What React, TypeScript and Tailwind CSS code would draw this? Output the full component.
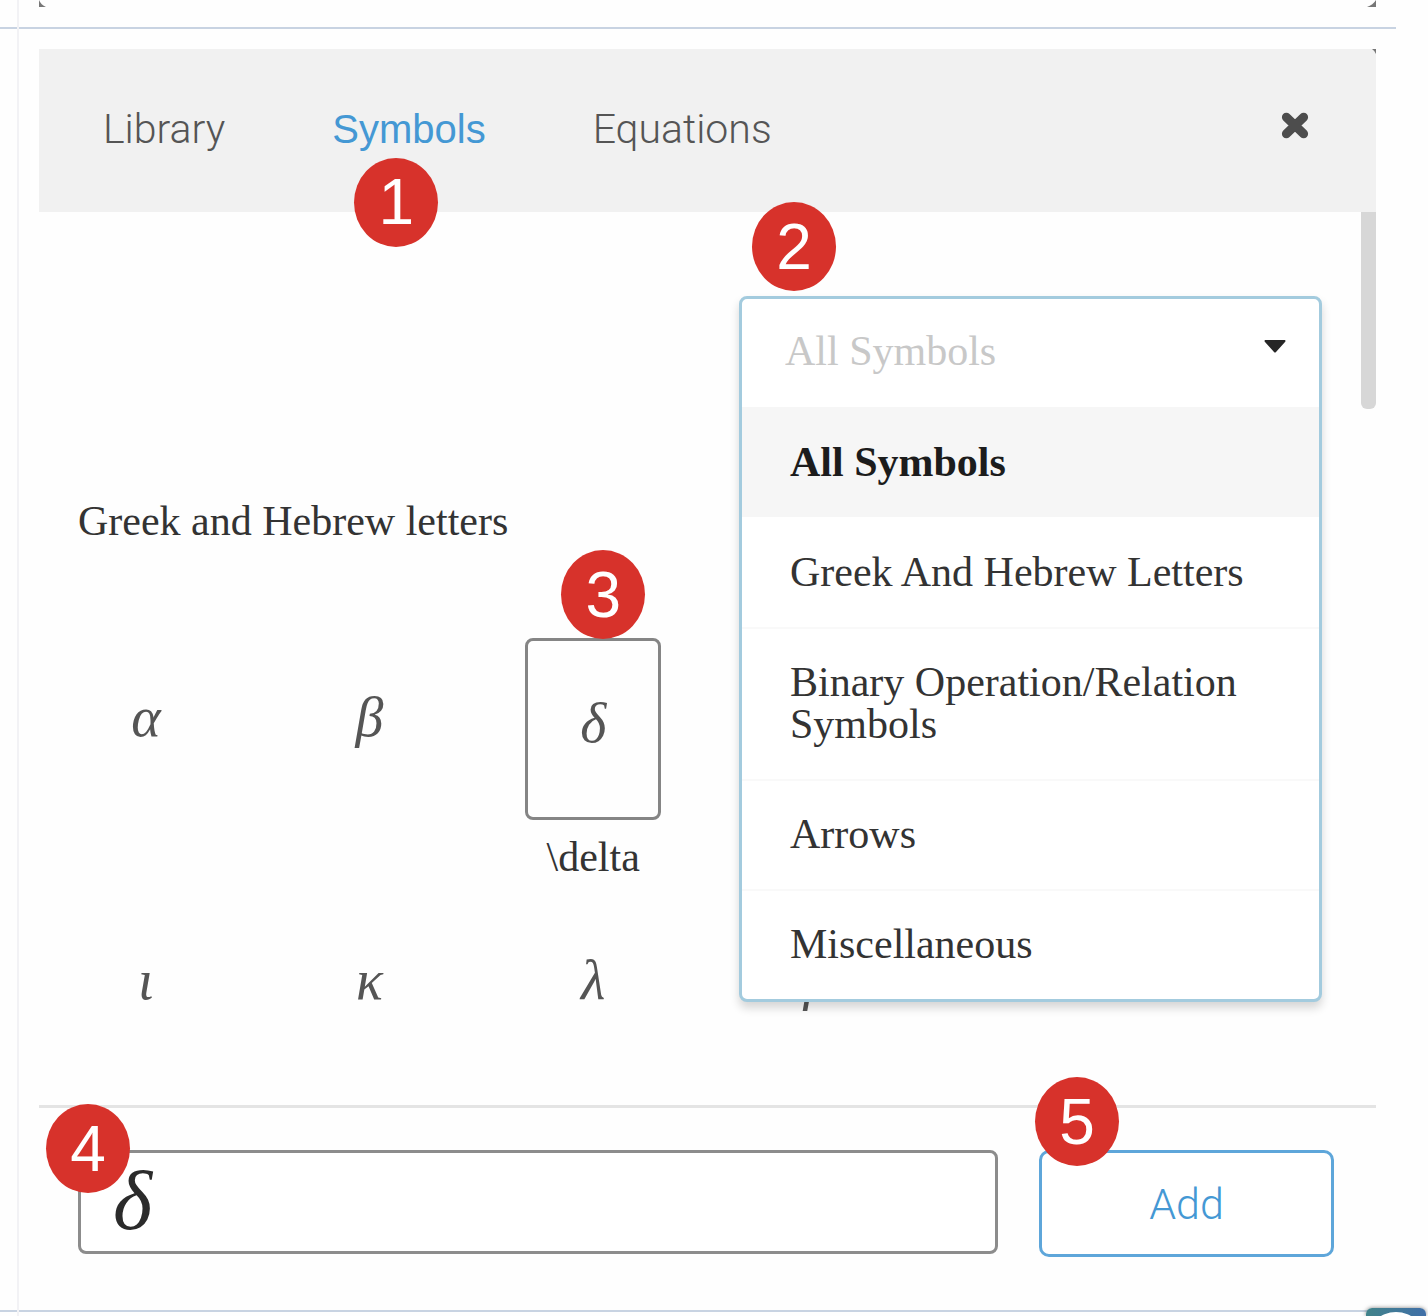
import React from "react";

const categories = [
  "All Symbols",
  "Greek And Hebrew Letters",
  "Binary Operation/Relation Symbols",
  "Arrows",
  "Miscellaneous",
];

const symbols = [
  { glyph: "α", name: "\\alpha" },
  { glyph: "β", name: "\\beta" },
  { glyph: "δ", name: "\\delta" },
  { glyph: "ε", name: "\\epsilon", covered: true },
  { glyph: "η", name: "\\eta", covered: true },
  { glyph: "", name: "" },
  { glyph: "ι", name: "\\iota" },
  { glyph: "κ", name: "\\kappa" },
  { glyph: "λ", name: "\\lambda" },
  { glyph: "μ", name: "\\mu" },
];

function Badge({ n, className }: { n: number; className: string }) {
  return (
    <span
      className={`absolute z-20 flex h-[89px] w-[84px] items-center justify-center rounded-[50%] bg-[#d7322b] font-['Liberation_Sans',sans-serif] text-[64px] leading-none font-normal text-white ${className}`}
    >
      {n}
    </span>
  );
}

function Header() {
  return (
    <header className="relative flex h-[163px] items-center justify-between bg-[#f1f1f1] pr-[67px] pl-[64px] text-[#555]">
      <nav className="flex gap-[107px] pb-1 leading-[48px]">
        <button type="button" className="font-['Roboto',sans-serif] text-[41px] font-light">
          Library
        </button>
        <div className="relative">
          <button type="button" className="font-['Liberation_Sans',sans-serif] text-[40px] text-[#4498d4]">
            Symbols
          </button>
          <Badge n={1} className="top-[53px] left-[22px]" />
        </div>
        <button type="button" className="font-['Roboto',sans-serif] text-[41px] font-light">
          Equations
        </button>
      </nav>
      <button type="button" aria-label="Close" className="mb-3">
        <svg viewBox="0 0 28 28" className="h-7 w-7" fill="none" stroke="#4d4d4d" strokeWidth="9" strokeLinecap="round">
          <path d="M5.4 6.2 L22.6 22.8 M22.6 6.2 L5.4 22.8" />
        </svg>
      </button>
      <svg viewBox="0 0 4 6" className="absolute top-0 right-0 h-1.5 w-1" fill="#777">
        <path d="M0 0 H4 V5 Q3 2 0 0Z" />
      </svg>
    </header>
  );
}

function CategoryMenu() {
  return (
    <div className="absolute top-[84px] right-[54px] z-10 w-[583px] rounded-lg border-[3px] border-[#a3cbde] bg-white shadow-[0_6px_10px_rgba(0,0,0,0.16)]">
      <Badge n={2} className="-top-[97px] left-[10px]" />
      <div className="relative">
        <select
          aria-label="Symbol category"
          defaultValue="All Symbols"
          className="block h-[108px] w-full appearance-none rounded-lg bg-transparent pr-16 pb-1 pl-[43px] leading-[54px] text-[#c8c8c8] outline-none"
        >
          {categories.map((c) => (
            <option key={c}>{c}</option>
          ))}
        </select>
        <svg viewBox="0 0 22 13" className="pointer-events-none absolute top-[41px] right-[33px] h-[13px] w-[22px]" fill="#262626">
          <path d="M1 0 H21 Q22 1 21 2 L12 12 Q11 13 10 12 L1 2 Q0 1 1 0Z" />
        </svg>
      </div>
      <ul>
        {categories.map((c, i) => (
          <li key={c}>
            <button
              type="button"
              className={
                i === 0
                  ? "block w-full bg-[#f6f6f6] px-12 py-[34px] text-left font-bold text-[#1c1c1c]"
                  : i === 1
                    ? "block w-full px-12 py-[34px] text-left"
                    : "block w-full border-t-2 border-[#f9f9f9] px-12 pt-8 pb-[34px] text-left"
              }
            >
              {c}
            </button>
          </li>
        ))}
      </ul>
    </div>
  );
}

function SymbolGrid() {
  return (
    <section className="pt-[288px] pr-11 pb-[22px] pl-[39px]">
      <h2 className="mb-24">Greek and Hebrew letters</h2>
      <div className="grid grid-cols-6 items-start gap-x-[88px] gap-y-[23px]">
        {symbols.map((s) => {
          const selected = s.glyph === "δ";
          return (
            <div key={s.name} className="text-center">
              <div className="relative">
                {s.glyph && !s.covered && (
                  <button
                    type="button"
                    aria-label={s.name}
                    className={`block h-[182px] w-full rounded-lg border-[3px] text-[56px] leading-none text-[#555] italic ${
                      selected ? "border-[#858585] pb-3" : "border-transparent pb-6"
                    }`}
                  >
                    {s.glyph}
                  </button>
                )}
                {selected && <Badge n={3} className="-top-[88px] left-[36px]" />}
              </div>
              {selected && <div className="mt-4">{s.name}</div>}
            </div>
          );
        })}
      </div>
    </section>
  );
}

function Footer() {
  return (
    <footer className="flex items-start gap-[41px] border-t-[3px] border-[#e4e4e4] pt-[42px] pr-[42px] pb-[53px] pl-[39px]">
      <div className="relative flex-1">
        <input
          aria-label="Equation"
          defaultValue="δ"
          className="block h-[104px] w-full rounded-lg border-[3px] border-[#8c8c8c] bg-white px-8 pb-1 text-[84px] leading-none text-[#2b2b2b] italic outline-none"
        />
        <Badge n={4} className="-top-[46px] -left-8" />
      </div>
      <div className="relative">
        <button
          type="button"
          className="block h-[107px] w-[295px] rounded-[10px] border-[3px] border-[#5ea6da] bg-white font-['Roboto',sans-serif] text-[43px] font-light text-[#4498d4]"
        >
          Add
        </button>
        <Badge n={5} className="-top-[73px] -left-1" />
      </div>
    </footer>
  );
}

export default function App() {
  return (
    <div className="min-h-screen overflow-hidden bg-[#fefefe] font-['Liberation_Serif',serif] text-[42px] leading-[42px] text-[#333]">
      <div className="mr-8 flex">
        <div className="w-[17px] border-b-2 border-[#c8d3e2]" />
        <div className="w-0.5 bg-[#f2f2f5]" />
        <div className="flex h-[29px] flex-1 justify-between border-b-2 border-[#c8d3e2] px-5">
          <svg viewBox="0 0 7 7" className="h-[7px] w-[7px]" fill="#777">
            <path d="M0 0 Q2 5 7 7 H0Z" />
          </svg>
          <svg viewBox="0 0 9 7" className="h-[7px] w-[9px]" fill="#777">
            <path d="M9 0 Q6 5 0 7 H9Z" />
          </svg>
        </div>
      </div>
      <div className="mr-8 flex">
        <div className="w-[17px] border-b-2 border-[#c8d3e2]" />
        <div className="w-0.5 bg-[#f2f2f5]" />
        <main className="flex-1 border-b-2 border-[#c8d3e2] px-5 pt-5">
          <Header />
          <div className="relative">
            <div className="absolute top-0 right-0 h-[197px] w-[15px] rounded-b-md bg-[#d7d7d7]" />
            <CategoryMenu />
            <SymbolGrid />
          </div>
          <Footer />
        </main>
      </div>
      <div className="flex h-1">
        <div className="ml-[17px] w-0.5 bg-[#f2f2f5]" />
      </div>
      <svg viewBox="0 0 60 8" className="fixed right-[2px] bottom-0 h-2 w-[60px] rounded-t-md shadow-[0_0_4px_rgba(0,0,0,0.5)]">
        <defs>
          <linearGradient id="logo" x1="0" x2="1" y1="0" y2="0">
            <stop offset="0" stopColor="#41838a" />
            <stop offset="1" stopColor="#406fa8" />
          </linearGradient>
        </defs>
        <rect width="60" height="8" fill="url(#logo)" />
        <circle cx="30" cy="34" r="30" fill="#fff" />
      </svg>
    </div>
  );
}
